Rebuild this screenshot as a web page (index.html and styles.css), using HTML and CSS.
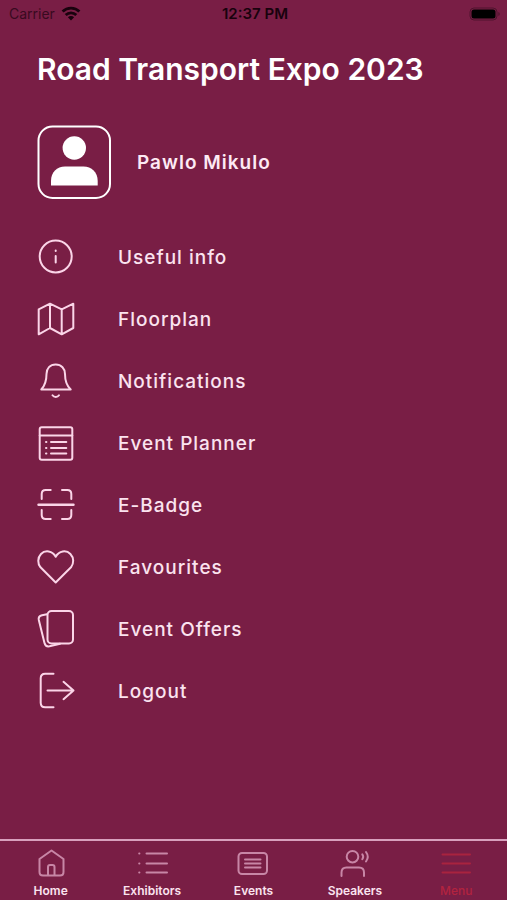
FILE: index.html
```html
<!DOCTYPE html>
<html lang="en">
<head>
<meta charset="utf-8">
<meta name="viewport" content="width=device-width, initial-scale=1">
<title>Road Transport Expo 2023</title>
<link rel="stylesheet" href="styles.css">
</head>
<body>
<div class="app">
  <div class="status">
    <div class="carrier">
      <span>Carrier</span>
      <svg class="wifi" width="20" height="16" viewBox="0 0 20 16" aria-hidden="true">
        <path d="M1.600 5.600a12 12 0 0 1 16.800 0M4.700 9a7.600 7.600 0 0 1 10.600 0" fill="none" stroke="currentColor" stroke-width="2.800"/>
        <path d="M6.900 11.300a4.400 4.400 0 0 1 6.200 0L10 14.600z" fill="currentColor"/>
      </svg>
    </div>
    <div class="time">12:37 PM</div>
    <svg class="battery" width="32" height="14" viewBox="0 0 32 14" aria-hidden="true">
      <rect x="1" y="1" width="27" height="12" rx="4" fill="none" stroke="currentColor" stroke-opacity=".35"/>
      <rect x="2.500" y="2.500" width="24" height="9" rx="2.500" fill="currentColor"/>
      <path d="M29.500 5v4a2.400 2.400 0 0 0 0-4z" fill="currentColor" fill-opacity=".45"/>
    </svg>
  </div>

  <main class="content">
    <h1 class="title">Road Transport Expo 2023</h1>
    <div class="profile">
      <svg class="avatar" width="74" height="74" viewBox="0 0 74 74" aria-hidden="true">
        <rect x="1.500" y="1.500" width="71.500" height="71.500" rx="14" fill="none" stroke="currentColor" stroke-width="2"/>
        <circle cx="37.300" cy="23" r="11.700" fill="currentColor"/>
        <path d="M14 60.500V56C14 47 20 41.500 28 41.500H46.500C54.500 41.500 60.700 47 60.700 56V60.500z" fill="currentColor"/>
      </svg>
      <span class="name">Pawlo Mikulo</span>
    </div>

    <nav class="menu" aria-label="Main menu">
      <a class="item" href="#info">
        <svg class="icon" viewBox="0 0 38 38" aria-hidden="true"><circle cx="18.700" cy="18.500" r="16"/><path d="M18.700 18v6.500"/><path d="M18.700 12.500v.6"/></svg>
        <span>Useful info</span></a>
      <a class="item" href="#floorplan">
        <svg class="icon" viewBox="0 0 38 38" aria-hidden="true"><path d="M1.700 9.300 13 3.700l11.700 5.600 11.600-5.600V28l-11.600 6.300L13 28 1.700 34.300zM13 3.700V28M24.700 9.300v25"/></svg>
        <span>Floorplan</span></a>
      <a class="item" href="#notifications">
        <svg class="icon" viewBox="0 0 38 38" aria-hidden="true"><path d="M18.700 2.500C13 2.500 9.500 6.500 9.500 12C9.500 19 8 23.500 4.300 27.500H33.700C29.500 23.500 28 19 28 12C28 6.500 24.400 2.500 18.700 2.500z"/><path d="M15.500 33.300c1.500 2.200 5 2.200 6.500 0"/></svg>
        <span>Notifications</span></a>
      <a class="item" href="#planner">
        <svg class="icon" viewBox="0 0 38 38" aria-hidden="true"><rect x="2.700" y="3.300" width="32.600" height="32.400" rx="2"/><path d="M2.700 11.500h32.600M14 18h15.300M14 24h15.300M14 29.500h15.300M9 18h.4M9 24h.4M9 29.500h.4"/></svg>
        <span>Event Planner</span></a>
      <a class="item" href="#badge">
        <svg class="icon" viewBox="0 0 38 38" aria-hidden="true"><path d="M4.700 13V8q0-4 4-4h5M25 4h5.300q4 0 4 4v5M4.700 24v5q0 4 4 4h5M25 33h5.300q4 0 4-4v-5"/><path d="M1.500 18.700h35" stroke-width="2.400"/></svg>
        <span>E-Badge</span></a>
      <a class="item" href="#favourites">
        <svg class="icon" viewBox="0 0 38 38" aria-hidden="true"><path d="M18.700 8.800C15.500 2.500 8 1.800 4 6C.4 9.800.5 15.500 3.500 19.300L18.700 34.500 34 19.300C37 15.500 37 9.800 33.400 6C29.400 1.800 22 2.500 18.700 8.800z"/></svg>
        <span>Favourites</span></a>
      <a class="item" href="#offers">
        <svg class="icon" viewBox="0 0 38 38" aria-hidden="true"><rect x="10.500" y="1" width="25.500" height="32.500" rx="4"/><path d="M10 4.300 5 5.300Q1 6.200 1.800 10L7.500 33Q8.500 37 12.500 36.300L23 33.700"/></svg>
        <span>Event Offers</span></a>
      <a class="item" href="#logout">
        <svg class="icon" viewBox="0 0 38 38" aria-hidden="true"><path d="M16.500 1.700H8.200q-4.500 0-4.500 4.500v24.600q0 4.500 4.500 4.500h8.300M10.500 18.500H36.500M26.500 9.800l10 8.700-10 8.700"/></svg>
        <span>Logout</span></a>
    </nav>
  </main>

  <nav class="tabs" aria-label="Tabs">
    <a class="tab" href="#home">
      <svg class="tab-icon" viewBox="0 0 36 28" aria-hidden="true"><path d="M18.500 1.500 6.500 10V23q0 3.500 3.500 3.500H27q3.500 0 3.500-3.500V10zM15 26.500V18q0-2 2-2h2.500q2 0 2 2v8.500"/></svg>
      <span>Home</span></a>
    <a class="tab" href="#exhibitors">
      <svg class="tab-icon" viewBox="0 0 36 28" aria-hidden="true"><path d="M12.500 4.500H33M12.500 14.500H33M12.500 23.500H33M5.200 4.500h.2M5.200 14.500h.2M5.200 23.500h.2"/></svg>
      <span>Exhibitors</span></a>
    <a class="tab" href="#events">
      <svg class="tab-icon" viewBox="0 0 36 28" aria-hidden="true"><rect x="3.500" y="4" width="28.500" height="21" rx="3.500"/><path d="M10 10.500h15.500M10 14.500h15.500M10 18.500h15.500"/></svg>
      <span>Events</span></a>
    <a class="tab" href="#speakers">
      <svg class="tab-icon" viewBox="0 0 36 28" aria-hidden="true"><circle cx="15.500" cy="7.700" r="5.800"/><path d="M4.500 27v-3.500q0-5 5-5H22q5 0 5 5V27M25.300 5.300q1.800 2.400 0 5M29 3q3.500 4.700 0 9.500"/></svg>
      <span>Speakers</span></a>
    <a class="tab current" href="#menu" aria-current="page">
      <svg class="tab-icon" viewBox="0 0 36 28" aria-hidden="true"><path d="M4.500 5.500H32M4.500 14.500H32M4.500 23.500H32"/></svg>
      <span>Menu</span></a>
  </nav>
</div>
</body>
</html>
```
FILE: styles.css
```css
* { box-sizing: border-box; }
body {
  margin: 0;
  background: #791e45;
  color: #fff;
  font-family: Inter, "Liberation Sans", sans-serif;
}
a { color: inherit; text-decoration: none; }
.app {
  min-height: 100vh;
  display: flex;
  flex-direction: column;
}
.status {
  display: grid;
  grid-template-columns: 1fr auto 1fr;
  align-items: center;
  height: 28px;
  padding: 0 6px 0 9px;
  color: #18020d;
  font-size: 14px;
  line-height: 20px;
}
.carrier { display: flex; align-items: center; gap: 6px; color: #380a20; }
.wifi { color: #18020d; }
.time { font-size: 15px; font-weight: 600; }
.battery { justify-self: end; color: #000; }
.content { flex: 1; padding: 20px 37px; }
.title {
  margin: 0;
  font-size: 30px;
  line-height: 42px;
  font-weight: 600;
}
.profile {
  display: flex;
  align-items: center;
  gap: 26px;
  margin-top: 35px;
}
.avatar { flex: none; }
.name { font-size: 19px; font-weight: 600; letter-spacing: 1px; color: #fdeaf4; }
.menu { margin-top: 27px; }
.item {
  display: flex;
  align-items: center;
  gap: 43px;
  height: 62px;
  font-size: 19px;
  font-weight: 500;
  letter-spacing: 1px;
  color: #fbe3ef;
}
.icon {
  width: 38px;
  height: 38px;
  overflow: visible;
  fill: none;
  stroke: #fbd5e8;
  stroke-width: 2;
  stroke-linecap: round;
  stroke-linejoin: round;
}
.tabs {
  display: grid;
  grid-template-columns: repeat(5, 1fr);
  border-top: 2px solid #d8a0bd;
  padding: 8px 0 1px;
}
.tab {
  display: flex;
  flex-direction: column;
  align-items: center;
  gap: 6px;
  font-size: 12px;
  line-height: 16px;
  font-weight: 600;
  color: #fbe3ef;
}
.tab-icon {
  width: 36px;
  height: 28px;
  fill: none;
  stroke: #c886a6;
  stroke-width: 2;
  stroke-linecap: round;
  stroke-linejoin: round;
}
.current { color: #b3233f; font-weight: 500; }
.current .tab-icon { stroke: #a9233f; }
```
